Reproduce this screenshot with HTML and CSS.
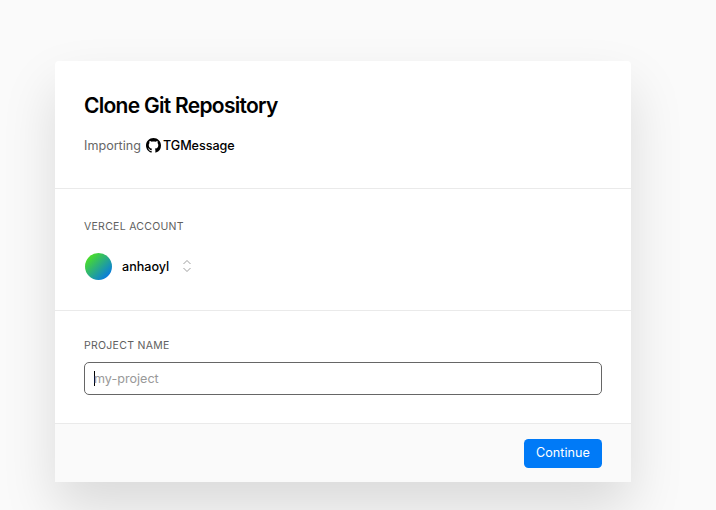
FILE: index.html
```html
<!DOCTYPE html>
<html lang="en">
<head>
<meta charset="utf-8">
<title>Clone Git Repository</title>
<link rel="stylesheet" href="styles.css">
</head>
<body>
<main class="card">
  <header class="section intro">
    <h1 class="title">Clone Git Repository</h1>
    <p class="source">
      <span class="muted">Importing</span>
      <svg class="github" viewBox="0 0 16 16" aria-hidden="true"><path fill-rule="evenodd" d="M8 0C3.58 0 0 3.58 0 8c0 3.54 2.29 6.53 5.47 7.59.4.07.55-.17.55-.38 0-.19-.01-.82-.01-1.49-2.01.37-2.53-.49-2.69-.94-.09-.23-.48-.94-.82-1.13-.28-.15-.68-.52-.01-.53.63-.01 1.08.58 1.23.82.72 1.21 1.87.87 2.33.66.07-.52.28-.87.51-1.07-1.78-.2-3.64-.89-3.64-3.95 0-.87.31-1.59.82-2.15-.08-.2-.36-1.02.08-2.12 0 0 .67-.21 2.2.82.64-.18 1.32-.27 2-.27s1.36.09 2 .27c1.53-1.04 2.2-.82 2.2-.82.44 1.1.16 1.92.08 2.12.51.56.82 1.27.82 2.15 0 3.07-1.87 3.75-3.65 3.95.29.25.54.73.54 1.48 0 1.07-.01 1.93-.01 2.2 0 .21.15.46.55.38A8.01 8.01 0 0 0 16 8c0-4.42-3.58-8-8-8z"/></svg>
      <span class="repo">TGMessage</span>
    </p>
  </header>
  <section class="section account">
    <h2 class="label">VERCEL ACCOUNT</h2>
    <div class="picker">
      <span class="avatar"></span>
      <span class="username">anhaoyl</span>
      <svg class="chevrons" viewBox="0 0 8 12" aria-hidden="true"><path d="M.5 4 4 .5 7.500 4M.5 8 4 11.500 7.500 8"/></svg>
    </div>
  </section>
  <section class="section project">
    <h2 class="label">PROJECT NAME</h2>
    <div class="field"><span class="caret"></span><span class="placeholder">my-project</span></div>
  </section>
  <footer class="footer">
    <button class="continue" type="button">Continue</button>
  </footer>
</main>
</body>
</html>
```
FILE: styles.css
```css
* { box-sizing: border-box; }
html { background: #fafafa; }
body {
  margin: 0;
  min-height: 100vh;
  padding: 61px 0 0 55px;
  font-family: Inter, "Liberation Sans", sans-serif;
  font-size: 12.6px;
  color: #000;
}
h1, h2, p { margin: 0; }
.card {
  width: 576px;
  height: 421px;
  display: flex;
  flex-direction: column;
  background: #fff;
  border-radius: 4px 4px 0 0;
  box-shadow: 0 27px 54px rgba(0, 0, 0, .13);
}
.section { padding: 0 29px; border-bottom: 1px solid #eaeaea; }
.intro { height: 128px; padding-top: 30px; }
.title {
  font-size: 21px;
  line-height: 30px;
  font-weight: 600;
  letter-spacing: -.72px;
}
.source { display: flex; align-items: center; margin-top: 15px; height: 20px; line-height: 20px; }
.muted { width: 62px; color: #666; }
.github { width: 15px; height: 15px; margin: -1px 2px 0 0; }
.repo { font-weight: 500; letter-spacing: -.05px; }
.account { height: 122px; padding-top: 30px; }
.label {
  font-size: 10.5px;
  line-height: 16px;
  font-weight: 400;
  color: #606060;
  letter-spacing: .28px;
}
.picker { display: flex; align-items: center; height: 28px; margin-top: 17px; }
.avatar {
  width: 27px;
  height: 27px;
  margin: 0 10px 0 1px;
  border-radius: 50%;
  background: linear-gradient(135deg, #50e619 8%, #0070f3 94%);
}
.username { width: 61px; font-weight: 500; }
.chevrons { width: 8px; height: 12px; fill: none; stroke: #777; stroke-width: .7; }
.project { height: 113px; padding-top: 27px; }
.field {
  display: flex;
  align-items: center;
  height: 33px;
  margin-top: 8px;
  padding-left: 9px;
  border: 1px solid #666;
  border-radius: 5px;
}
.caret { width: 1px; height: 15px; margin-right: -1px; background: #000; }
.placeholder { color: #999; }
.footer {
  flex: 1;
  display: flex;
  justify-content: flex-end;
  align-items: flex-start;
  padding: 15px 29px 0;
  background: #fafafa;
}
.continue {
  width: 78px;
  height: 29px;
  padding: 0 0 2px;
  border: 0;
  border-radius: 4.500px;
  background: #007af7;
  color: #fff;
  font: 400 12.6px/27px Inter, "Liberation Sans", sans-serif;
  letter-spacing: .05px;
}
```
